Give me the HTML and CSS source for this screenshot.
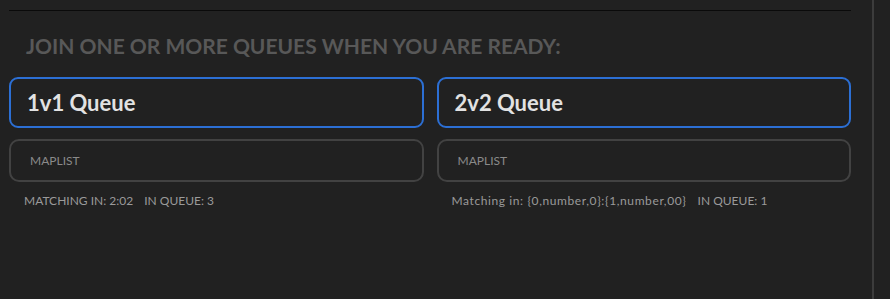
FILE: index.html
```html
<!DOCTYPE html>
<html lang="en">
<head>
	<meta charset="UTF-8">
	<title>Queues</title>
	<link rel="stylesheet" href="styles.css">
</head>
<body>
	<div class="layout">
		<div class="content">
			<div class="queue-panel">
				<h2 class="queue-title">JOIN ONE OR MORE QUEUES WHEN YOU ARE READY:</h2>

				<div class="queue-grid">
					<div class="queue-col">
						<div class="queue-card">1v1 Queue</div>
						<div class="queue-maplist">MAPLIST</div>
						<div class="queue-status">
							<span>MATCHING IN: 2:02</span>
							<span>IN QUEUE: 3</span>
						</div>
					</div>

					<div class="queue-col">
						<div class="queue-card">2v2 Queue</div>
						<div class="queue-maplist">MAPLIST</div>
						<div class="queue-status">
							<span class="queue-status-raw">Matching in: {0,number,0}:{1,number,00}</span>
							<span>IN QUEUE: 1</span>
						</div>
					</div>
				</div>
			</div>
		</div>
		<div class="sidebar"></div>
	</div>
</body>
</html>
```

FILE: styles.css
```css
html, body {
	margin: 0;
	height: 100%;
	background-color: #212121;
	font-family: "Lato", "Noto Sans", sans-serif;
}
.layout {
	display: flex;
	height: 100%;
}
.content {
	width: 872px;
	padding: 10px 0 0 9px;
	box-sizing: border-box;
}
.sidebar {
	flex: 1;
	border-left: 2px solid #3c3c3c;
}
.queue-panel {
	width: 842px;
	border-top: 1px solid #0a0a0a;
}
.queue-title {
	margin: 0;
	padding: 23px 0 0 17px;
	height: 43px;
	font-size: 21px;
	font-weight: 700;
	line-height: 24px;
	color: #585858;
}
.queue-grid {
	display: grid;
	grid-template-columns: 1fr 1fr;
	column-gap: 13px;
}
.queue-card {
	height: 51px;
	box-sizing: border-box;
	border: 2px solid #2c6fd4;
	border-radius: 9px;
	padding-left: 16px;
	font-size: 22px;
	font-weight: 700;
	line-height: 47px;
	color: #e2e2e2;
}
.queue-maplist {
	margin-top: 11px;
	height: 43px;
	box-sizing: border-box;
	border: 2px solid #424242;
	border-radius: 10px;
	padding-left: 19px;
	font-size: 12px;
	line-height: 39px;
	color: #8a8a8a;
}
.queue-status {
	margin-top: 11px;
	padding-left: 15px;
	font-size: 12px;
	color: #9a9a9a;
}
.queue-status span + span {
	margin-left: 8px;
}
.queue-status-raw {
	letter-spacing: 0.6px;
}
```
